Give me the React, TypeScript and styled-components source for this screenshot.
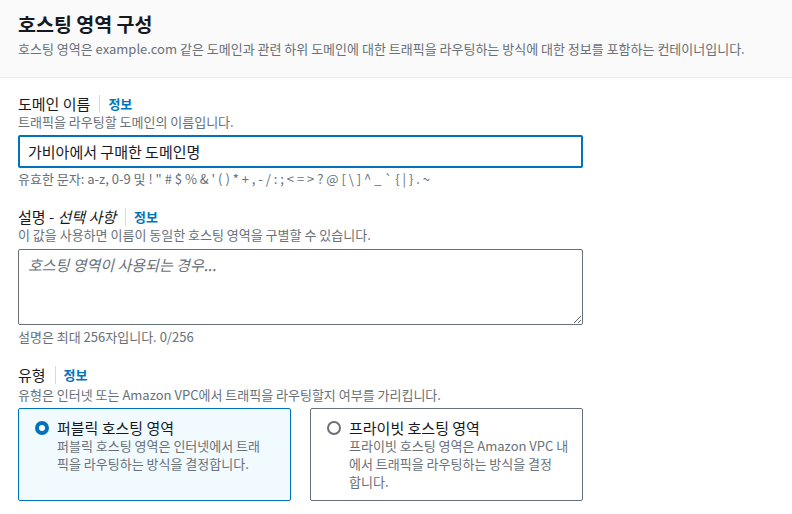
import React from "react";
import styled, { createGlobalStyle } from "styled-components";

const Global = createGlobalStyle`
  html, body { margin: 0; padding: 0; background: #ffffff; }
  body {
    font-family: "Noto Sans CJK KR", "Open Sans", sans-serif;
    color: #16191f;
  }
  * { box-sizing: border-box; }
`;

const Page = styled.div`
  width: 792px;
  min-height: 514px;
  background: #ffffff;
`;

const Header = styled.header`
  background: #fafafa;
  border-bottom: 1px solid #eaeded;
  padding: 12px 18px 19px 18px;
  display: flex;
  flex-direction: column;
  gap: 4px;
`;

const Title = styled.h2`
  margin: 0;
  font-size: 19.5px;
  line-height: 24px;
  font-weight: 700;
  color: #16191f;
`;

const HeaderDesc = styled.p`
  margin: 0;
  font-size: 13px;
  line-height: 18px;
  color: #687078;
`;

const Body = styled.div`
  padding: 16px 18px 0 18px;
  width: 601px;
  display: flex;
  flex-direction: column;
`;

const Field = styled.div<{ $gapTop?: number }>`
  display: flex;
  flex-direction: column;
  margin-top: ${(p) => p.$gapTop ?? 0}px;
`;

const LabelRow = styled.div`
  display: flex;
  align-items: center;
  height: 20px;
`;

const Label = styled.label`
  font-size: 15px;
  line-height: 20px;
  color: #16191f;
  em { font-style: italic; }
`;

const Sep = styled.span`
  width: 1px;
  height: 18px;
  background: #d5dbdb;
  margin: 0 8px 0 9px;
`;

const Info = styled.a`
  font-size: 13px;
  font-weight: 700;
  color: #0073bb;
  text-decoration: none;
  line-height: 20px;
`;

const Hint = styled.div<{ $mt?: number }>`
  font-size: 13px;
  line-height: 16px;
  color: #687078;
  margin-top: ${(p) => p.$mt ?? 0}px;
`;

const TextInput = styled.input`
  margin-top: 5px;
  height: 33px;
  width: 565px;
  border: 2px solid #0073bb;
  border-radius: 2px;
  padding: 0 8px;
  font-family: "Noto Sans CJK KR", sans-serif;
  font-size: 15px;
  color: #16191f;
  outline: none;
  background: #fff;
`;

const TextArea = styled.textarea`
  margin-top: 6px;
  height: 76px;
  width: 565px;
  border: 1px solid #687078;
  border-radius: 2px;
  padding: 5px 9px;
  font-family: "Noto Sans CJK KR", sans-serif;
  font-size: 15px;
  line-height: 20px;
  color: #16191f;
  resize: vertical;
  outline: none;
  &::placeholder {
    color: #687078;
    font-style: italic;
  }
`;

const Cards = styled.div`
  margin-top: 5px;
  display: grid;
  grid-template-columns: 273px 273px;
  gap: 19px;
`;

const Card = styled.label<{ $selected?: boolean }>`
  display: flex;
  align-items: flex-start;
  gap: 8px;
  padding: 10px 12px 9px 16px;
  border: 1px solid ${(p) => (p.$selected ? "#0073bb" : "#687078")};
  background: ${(p) => (p.$selected ? "#f1faff" : "#ffffff")};
  border-radius: 2px;
  min-height: 91px;
`;

const Radio = styled.span<{ $checked?: boolean }>`
  flex: none;
  width: 14px;
  height: 14px;
  margin-top: 2px;
  border-radius: 50%;
  border: ${(p) => (p.$checked ? "4px solid #0073bb" : "2px solid #687078")};
  background: #ffffff;
`;

const CardText = styled.div`
  display: flex;
  flex-direction: column;
`;

const CardTitle = styled.div`
  font-size: 15px;
  line-height: 18px;
  color: #16191f;
`;

const CardDesc = styled.div`
  font-size: 13px;
  line-height: 18px;
  color: #687078;
  white-space: pre;
`;

export default function App() {
  return (
    <Page>
      <Global />
      <Header>
        <Title>호스팅 영역 구성</Title>
        <HeaderDesc>
          호스팅 영역은 example.com 같은 도메인과 관련 하위 도메인에 대한 트래픽을 라우팅하는 방식에 대한 정보를 포함하는 컨테이너입니다.
        </HeaderDesc>
      </Header>
      <Body>
        <Field>
          <LabelRow>
            <Label>도메인 이름</Label>
            <Sep />
            <Info>정보</Info>
          </LabelRow>
          <Hint>트래픽을 라우팅할 도메인의 이름입니다.</Hint>
          <TextInput defaultValue="가비아에서 구매한 도메인명" />
          <Hint $mt={3}>
            유효한 문자: a-z, 0-9 및 ! " # $ % &amp; ' ( ) * + , - / : ; &lt; = &gt; ? @ [ \ ] ^ _ ` {"{"} | {"}"} . ~
          </Hint>
        </Field>
        <Field $gapTop={20}>
          <LabelRow>
            <Label>
              설명 - <em>선택 사항</em>
            </Label>
            <Sep />
            <Info>정보</Info>
          </LabelRow>
          <Hint>이 값을 사용하면 이름이 동일한 호스팅 영역을 구별할 수 있습니다.</Hint>
          <TextArea placeholder="호스팅 영역이 사용되는 경우..." />
          <Hint $mt={4}>설명은 최대 256자입니다. 0/256</Hint>
        </Field>
        <Field $gapTop={20}>
          <LabelRow>
            <Label>유형</Label>
            <Sep />
            <Info>정보</Info>
          </LabelRow>
          <Hint $mt={2}>유형은 인터넷 또는 Amazon VPC에서 트래픽을 라우팅할지 여부를 가리킵니다.</Hint>
          <Cards>
            <Card $selected>
              <Radio $checked />
              <CardText>
                <CardTitle>퍼블릭 호스팅 영역</CardTitle>
                <CardDesc>{"퍼블릭 호스팅 영역은 인터넷에서 트래\n픽을 라우팅하는 방식을 결정합니다."}</CardDesc>
              </CardText>
            </Card>
            <Card>
              <Radio />
              <CardText>
                <CardTitle>프라이빗 호스팅 영역</CardTitle>
                <CardDesc>{"프라이빗 호스팅 영역은 Amazon VPC 내\n에서 트래픽을 라우팅하는 방식을 결정\n합니다."}</CardDesc>
              </CardText>
            </Card>
          </Cards>
        </Field>
      </Body>
    </Page>
  );
}
